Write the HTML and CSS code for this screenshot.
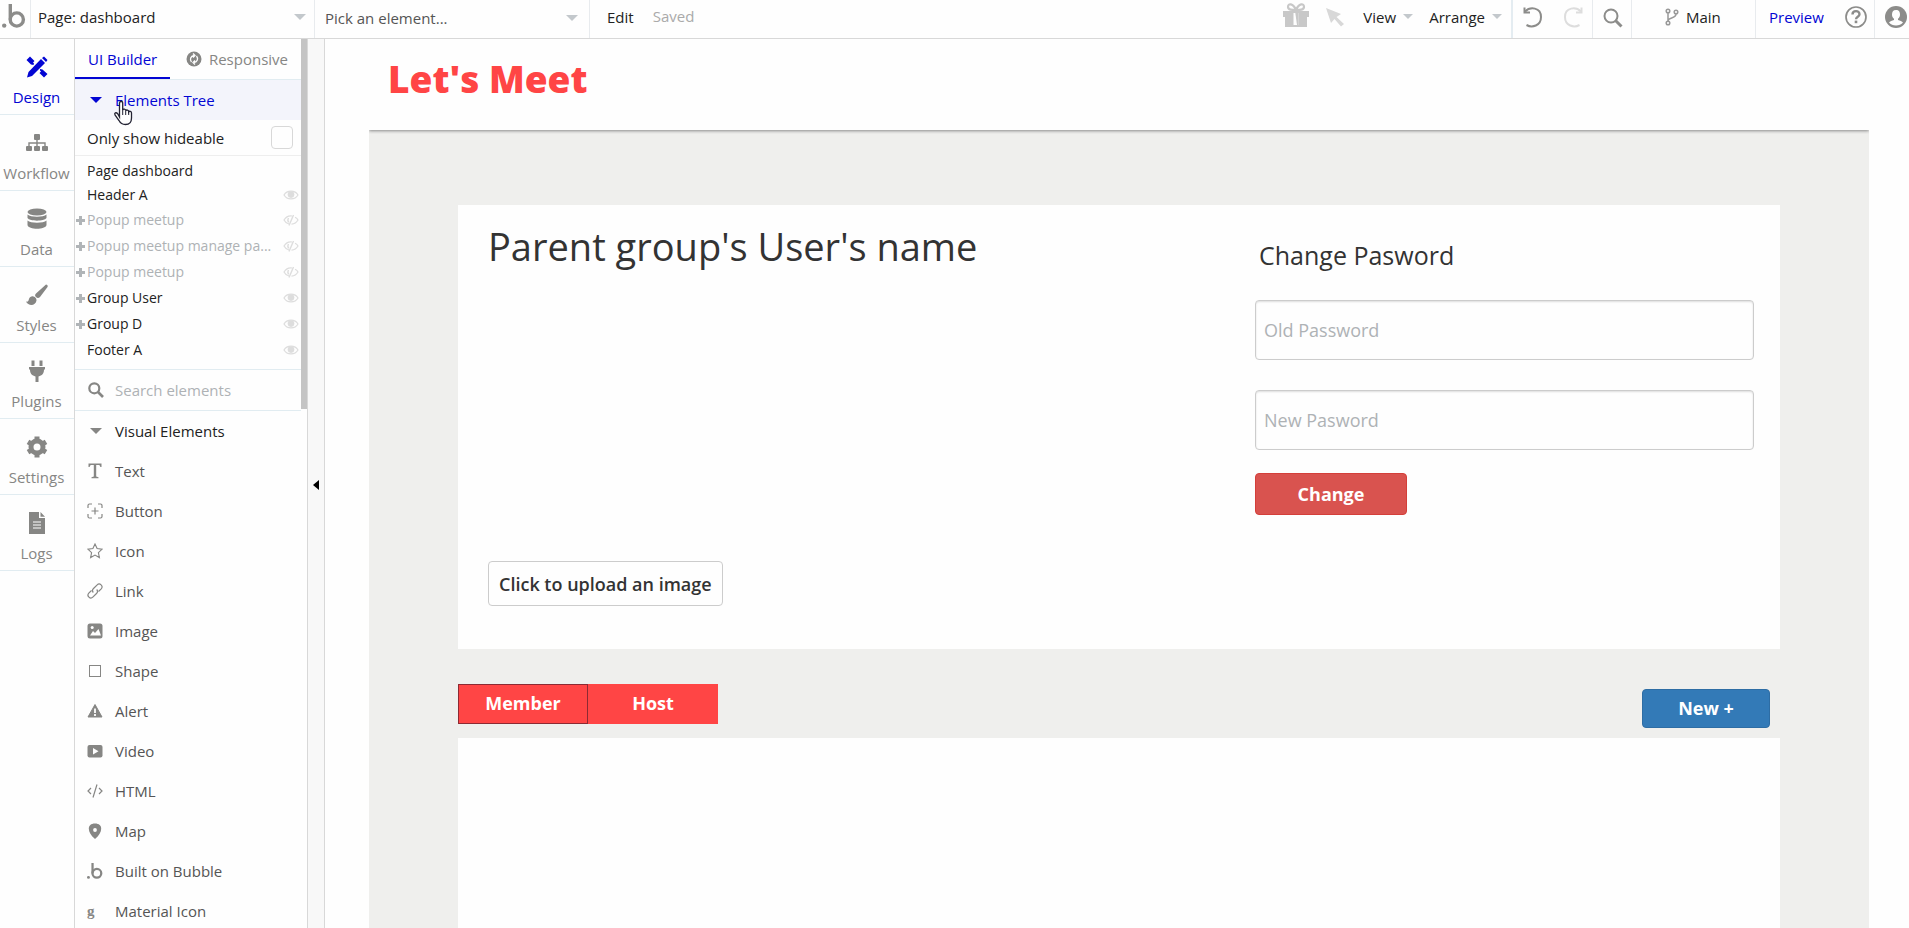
FILE: index.html
```html
<!DOCTYPE html>
<html lang="en">
<head>
  <meta charset="UTF-8" />
  <meta name="viewport" content="width=device-width, initial-scale=1.0"/>
  <title>Page: dashboard</title>
  <link rel="stylesheet" href="styles.css">
</head>
<body>

  <!-- shared icons -->
  <svg class="sprite" aria-hidden="true">
    <symbol id="eye" viewBox="0 0 16 10">
      <path d="M1 5C4-.2 12-.2 15 5 12 10.2 4 10.2 1 5z" fill="none" stroke="currentColor" stroke-width="1.2"/>
      <circle cx="8" cy="4.600" r="3.300" fill="currentColor"/>
    </symbol>
    <symbol id="eye-off" viewBox="0 0 16 12">
      <path d="M6 10C4 9.500 2 8 1 6 3.500 2 6.500 1.600 9 2M12 3.300C13.500 4 14.500 5 15 6 13.500 8.600 11 10 8.500 10.200" fill="none" stroke="currentColor" stroke-width="1.2"/>
      <path d="M10.500 1 6 11.500M5.500 4C4.500 6 5 7.500 6 8" fill="none" stroke="currentColor" stroke-width="1.4"/>
    </symbol>
    <symbol id="bubble" viewBox="0 0 24 24">
      <circle cx="2.200" cy="21.600" r="2.200" fill="currentColor"/>
      <path d="M8.300 0v15.500" fill="none" stroke="currentColor" stroke-width="3.400"/>
      <circle cx="14.800" cy="15.500" r="6.600" fill="none" stroke="currentColor" stroke-width="3.400"/>
    </symbol>
    <symbol id="search" viewBox="0 0 16 16">
      <circle cx="6.300" cy="6.300" r="5" fill="none" stroke="currentColor" stroke-width="2.200"/>
      <path d="M10 10l5 5" stroke="currentColor" stroke-width="2.600"/>
    </symbol>
  </svg>

  <header class="topbar">
    <a class="logo" href="#" aria-label="Home"><svg width="24" height="24"><use href="#bubble"/></svg></a>
    <button class="picker page-picker">Page: dashboard <i class="caret"></i></button>
    <button class="picker element-picker">Pick an element... <i class="caret"></i></button>
    <button class="menu edit">Edit</button>
    <span class="saved">Saved</span>

    <div class="group tools">
      <button class="icon-btn gift" aria-label="What's new">
        <svg width="26" height="24" viewBox="0 0 26 24" fill="currentColor">
          <path d="M0 8h26v6H0zM2 14h22v10H2z"/>
          <path d="M10.500 10h5v12h-5z" fill="#fefefe"/><path d="M12.300 10h3.200v12h-1.500z"/>
          <path d="M13 7C10 0 5 0 5 4c0 3 4 3 8 3zM13 7c3-7 8-7 8-3 0 3-4 3-8 3z" fill="none" stroke="currentColor" stroke-width="2.200"/>
        </svg>
      </button>
      <button class="icon-btn pointer" aria-label="Inspect">
        <svg width="20" height="20" viewBox="0 0 20 20" fill="currentColor"><path d="M1 1l15 6-4.500 3L19 17l-3 2.500-6.500-7.500L6 16z"/></svg>
      </button>
      <button class="menu">View <i class="caret small"></i></button>
      <button class="menu">Arrange <i class="caret small"></i></button>
    </div>
    <div class="group history">
      <button class="icon-btn" aria-label="Undo">
        <svg width="20" height="22" viewBox="0 0 20 22" fill="none" stroke="currentColor" stroke-width="2"><path d="M2 5.500C7 .5 18 1 18 11c0 9-9 11-14.500 8"/><path d="M1.500 1.500v5H7"/></svg>
      </button>
      <button class="icon-btn redo" aria-label="Redo">
        <svg width="20" height="22" viewBox="0 0 20 22" fill="none" stroke="currentColor" stroke-width="2"><path d="M18 5.500C13 .5 2 1 2 11c0 9 9 11 14.500 8"/><path d="M18.500 1.500v5H13"/></svg>
      </button>
    </div>
    <div class="group find">
      <button class="icon-btn" aria-label="Search">
        <svg width="20" height="20" viewBox="0 0 20 20" fill="none" stroke="currentColor"><circle cx="8" cy="8" r="6.500" stroke-width="2"/><path d="M12.500 12.500L18.500 18.500" stroke-width="3"/></svg>
      </button>
    </div>
    <div class="group branch">
      <button class="menu">
        <svg width="14" height="18" viewBox="0 0 14 18" fill="none" stroke="#999" stroke-width="1.500"><circle cx="3" cy="3" r="1.800"/><circle cx="3" cy="15" r="1.800"/><circle cx="11" cy="4" r="1.800"/><path d="M3 5v8M11 6c0 5-8 3-8 7"/></svg>
        Main
      </button>
    </div>
    <div class="group preview">
      <a href="#">Preview</a>
      <button class="icon-btn" aria-label="Help">
        <svg width="22" height="22" viewBox="0 0 22 22" fill="none" stroke="currentColor"><circle cx="11" cy="11" r="10" stroke-width="1.700"/><path d="M7.500 8.500C7.500 4 14.500 4 14.500 8.300c0 2.500-3.500 2.400-3.500 5" stroke-width="2.400"/><path d="M11 14.600v2.600" stroke-width="2.600"/></svg>
      </button>
    </div>
    <div class="group account">
      <button class="icon-btn" aria-label="Account">
        <svg width="22" height="22" viewBox="0 0 22 22"><circle cx="11" cy="11" r="11" fill="currentColor"/><path d="M11 4c-3 0-4 2-4 4.500 0 2 .8 3.500 2 4.300v1.200c-2 .8-4 1.200-5 2.500 3 4 11 4 14 0-1-1.300-3-1.700-5-2.500v-1.200c1.200-.8 2-2.300 2-4.300C15 6 14 4 11 4z" fill="#fefefe"/></svg>
      </button>
    </div>
  </header>

  <div class="workspace">

    <nav class="rail">
      <a class="active" href="#">
        <svg width="22" height="22" viewBox="0 0 22 22" fill="currentColor">
          <path d="M4 .5L8.500 5 7 6.500l1 1L7.500 9 5 8.500.5 4zM14 13l2.500.5L21.500 18 18 21.500 13.500 17l1.500-1.500-1-1z"/>
          <path d="M15 3l4 4L6 20l-5 1.500L2.500 16zM16 2l2-1.500L21.500 4 20 6z"/>
        </svg>
        Design
      </a>
      <a href="#">
        <svg width="22" height="22" viewBox="0 0 22 22" fill="currentColor">
          <rect x="8" y="2" width="6" height="6" rx="1"/><rect x="0" y="14" width="6" height="5" rx="1"/><rect x="8" y="14" width="6" height="5" rx="1"/><rect x="16" y="14" width="6" height="5" rx="1"/>
          <path d="M11 8v6M3 14v-3h16v3" fill="none" stroke="currentColor" stroke-width="1.400"/>
        </svg>
        Workflow
      </a>
      <a href="#">
        <svg width="22" height="22" viewBox="0 0 22 22" fill="currentColor">
          <ellipse cx="11" cy="4" rx="9.500" ry="3.500"/>
          <path d="M1.500 6.500c3 3 16 3 19 0V10c-2 3.500-17 3.500-19 0zM1.500 12.500c3 3 16 3 19 0V17c-1 5-18 5-19 0z"/>
        </svg>
        Data
      </a>
      <a href="#">
        <svg width="22" height="22" viewBox="0 0 22 22" fill="currentColor">
          <path d="M20 .5c1.500 0 2 1.500 1.500 2.500L14 13c-1.500 1.500-3 1-4 0s-1.500-2 0-3.500zM7.500 12.500c2 .5 3 2 3 4-1 6-8.500 5.500-10.500 1 2 .5 2.500-.5 3-2.500.7-2 2.500-3 4.500-2.500z"/>
        </svg>
        Styles
      </a>
      <a href="#">
        <svg width="22" height="22" viewBox="0 0 22 22" fill="currentColor">
          <path d="M5.500.5h3V6h-3zM13.500.5h3V6h-3zM3 7h16v2.500h-1c0 4-2 6-5.500 7V22h-3v-5.500C6 15.500 4 13.500 4 9.500H3z"/>
        </svg>
        Plugins
      </a>
      <a href="#">
        <svg width="22" height="22" viewBox="0 0 22 22">
          <circle cx="11" cy="11" r="6" fill="none" stroke="currentColor" stroke-width="5"/>
          <path d="M11 .5v4M11 17.500v4M2 5.800l3.400 2M16.600 14.200l3.400 2M2 16.200l3.400-2M16.600 7.800l3.400-2" stroke="currentColor" stroke-width="5"/>
        </svg>
        Settings
      </a>
      <a href="#">
        <svg width="22" height="22" viewBox="0 0 22 22" fill="currentColor">
          <path d="M3 0h10v6h6v16H3zM14.500 0L19 4.800h-4.500z"/>
          <path d="M7 10h8M7 13h8M7 16h8" stroke="#fefefe" stroke-width="1.200"/>
        </svg>
        Logs
      </a>
    </nav>

    <aside class="panel">
      <div class="panel-content">
        <div class="panel-tabs">
          <button class="active">UI Builder</button>
          <button>
            <svg width="16" height="16" viewBox="0 0 16 16"><circle cx="8" cy="8" r="7.500" fill="currentColor"/><path d="M5.500 11C3.500 8.500 4.500 5 8 4.500M10.500 5c2 2.500 1 6-2.500 6.500M7 2.500l2 2-2 2M9 9.500l-2 2 2 2" fill="none" stroke="#fefefe" stroke-width="1.300"/></svg>
            Responsive
          </button>
        </div>

        <button class="tree-title"><i class="caret"></i>Elements Tree
          <svg class="hand" width="20" height="26" viewBox="0 0 20 26"><path d="M6.500 17V3.500c0-3 3.200-3 3.200 0V10c.5-1.500 3-1.200 3 .8.600-1.300 3-1 3 1 .6-1 2.800-.6 2.800 1.200V18c0 4-2 6.500-6 6.500-3.500 0-5-1-6.500-4l-4-5.500c-1-2 1-3 2.500-1.500z" fill="#fff" stroke="#223" stroke-width="1.300"/><path d="M9.700 10v5M12.700 11v4M15.700 12v3" stroke="#223"/></svg>
        </button>

        <div class="hideable">
          <label for="hideable">Only show hideable</label>
          <input type="checkbox" id="hideable">
        </div>

        <ul class="tree">
          <li class="top">Page dashboard</li>
          <li class="top">Header A<svg width="16" height="10"><use href="#eye"/></svg></li>
          <li class="parent hidden">Popup meetup<svg width="16" height="12"><use href="#eye-off"/></svg></li>
          <li class="parent hidden">Popup meetup manage pa...<svg width="16" height="12"><use href="#eye-off"/></svg></li>
          <li class="parent hidden">Popup meetup<svg width="16" height="12"><use href="#eye-off"/></svg></li>
          <li class="parent">Group User<svg width="16" height="10"><use href="#eye"/></svg></li>
          <li class="parent">Group D<svg width="16" height="10"><use href="#eye"/></svg></li>
          <li>Footer A<svg width="16" height="10"><use href="#eye"/></svg></li>
        </ul>

        <div class="search">
          <svg width="16" height="16"><use href="#search"/></svg>
          <input type="text" placeholder="Search elements" aria-label="Search elements">
        </div>

        <button class="section"><i class="caret"></i>Visual Elements</button>
        <ul class="elements">
          <li><svg width="16" height="16" viewBox="0 0 16 16" fill="currentColor"><path d="M1.500.5h13V4h-1.200c-.2-1.500-.8-2-2-2H9.200v11.500l2.300.7v1h-7v-1l2.300-.7V2H4.700c-1.200 0-1.800.5-2 2H1.500z"/></svg>Text</li>
          <li><svg width="16" height="16" viewBox="0 0 16 16" fill="none" stroke="currentColor" stroke-width="1.200"><path d="M1 5V2.500Q1 1 2.500 1H5M11 1h2.500Q15 1 15 2.500V5M15 11v2.500q0 1.500-1.500 1.500H11M5 15H2.500Q1 15 1 13.500V11M8 4.500v7M4.500 8h7"/></svg>Button</li>
          <li><svg width="16" height="16" viewBox="0 0 16 16" fill="none" stroke="currentColor" stroke-width="1.100"><path d="M8 1l2.100 4.600 5 .6-3.700 3.400 1 5L8 12.100l-4.400 2.500 1-5L.9 6.200l5-.6z"/></svg>Icon</li>
          <li><svg width="16" height="16" viewBox="0 0 16 16" fill="none" stroke="currentColor" stroke-width="1.200"><path d="M6.300 9.500C5 8 5.300 6.700 6.500 5.500l3.700-3.700c2.500-2.500 6.500 1.300 4 4L11.500 8.500M9.700 6.500c1.300 1.500 1 2.800-.2 4l-3.700 3.700c-2.500 2.500-6.500-1.300-4-4L4.500 7.500"/></svg>Link</li>
          <li><svg width="16" height="16" viewBox="0 0 16 16"><rect x=".5" y=".5" width="15" height="15" rx="2.500" fill="currentColor"/><path d="M3 12.500L6 8l2 2 3.500-4L14 12.500z" fill="#fefefe"/><circle cx="5.200" cy="4.500" r="1.500" fill="#fefefe"/></svg>Image</li>
          <li><svg width="16" height="16" viewBox="0 0 16 16"><rect x="2.500" y="2.500" width="11" height="11" fill="none" stroke="currentColor"/></svg>Shape</li>
          <li><svg width="16" height="16" viewBox="0 0 16 16"><path d="M8 1.500L15 14H1z" fill="currentColor" stroke="currentColor" stroke-linejoin="round"/><path d="M8 5.500v4.500M8 11v2" stroke="#fefefe" stroke-width="1.800"/></svg>Alert</li>
          <li><svg width="16" height="16" viewBox="0 0 16 16"><rect x=".5" y="2" width="15" height="12.500" rx="2" fill="currentColor"/><path d="M6 5l5.500 3.200L6 11.500z" fill="#fefefe"/></svg>Video</li>
          <li><svg width="16" height="16" viewBox="0 0 16 16" fill="none" stroke="currentColor" stroke-width="1.200"><path d="M4 5L1 8l3 3M12 5l3 3-3 3M10 1.500L6 14.500"/></svg>HTML</li>
          <li><svg width="16" height="16" viewBox="0 0 16 16"><path d="M8 .5c8.500 0 8 9 0 15.500C0 9.500-.5.500 8 .5z" fill="currentColor"/><circle cx="8" cy="7" r="1.900" fill="#fefefe"/></svg>Map</li>
          <li><svg width="16" height="16"><use href="#bubble"/></svg>Built on Bubble</li>
          <li><b class="letter">g</b>Material Icon</li>
        </ul>
      </div>
      <div class="scrollbar"><div class="thumb"></div></div>
    </aside>

    <button class="collapse" aria-label="Collapse panel"><i></i></button>

    <main class="canvas">
      <div class="page">
        <div class="page-header"><h1>Let's Meet</h1></div>

        <div class="page-body">
          <section class="card user">
            <div class="profile">
              <h2>Parent group's User's name</h2>
              <button class="btn upload">Click to upload an image</button>
            </div>
            <form class="password">
              <h3>Change Pasword</h3>
              <input type="text" placeholder="Old Password" aria-label="Old Password">
              <input type="text" placeholder="New Pasword" aria-label="New Pasword">
              <button type="button" class="btn change">Change</button>
            </form>
          </section>

          <div class="actions">
            <div class="roles">
              <button class="selected">Member</button>
              <button>Host</button>
            </div>
            <button class="btn new">New +</button>
          </div>

          <section class="card list"></section>
        </div>
      </div>
    </main>

  </div>

</body>
</html>
```
FILE: styles.css
```css
* {
  margin: 0;
  padding: 0;
  box-sizing: border-box;
}

body {
  font-family: 'Open Sans', sans-serif;
  font-size: 15px;
  line-height: 20px;
  color: #222;
  background: #fefefe;
  height: 100vh;
  display: flex;
  flex-direction: column;
  overflow: hidden;
}

button, input {
  font: inherit;
  color: inherit;
  background: none;
  border: none;
}

button {
  cursor: pointer;
  white-space: nowrap;
}

a {
  color: inherit;
  text-decoration: none;
}

ul {
  list-style: none;
}

svg {
  flex: none;
}

.sprite {
  position: absolute;
  width: 0;
  height: 0;
}

.caret {
  flex: none;
  border: 6px solid transparent;
  border-top-color: currentColor;
  border-bottom: none;
}

.caret.small {
  border-width: 5px;
  border-bottom: none;
}

/* top bar */
.topbar {
  display: flex;
  flex: none;
  height: 39px;
  border-bottom: 1px solid #d8d8d8;
}

.logo {
  width: 31px;
  padding: 4px 2px;
  color: #8c8c8a;
  border-right: 1px solid #e8ebee;
}

.picker {
  display: flex;
  align-items: center;
  justify-content: space-between;
  padding: 0 8px 5px 7px;
  border-right: 1px solid #e8ebee;
}

.page-picker {
  width: 284px;
}

.element-picker {
  width: 275px;
  padding: 0 11px 3px 10px;
  color: #555;
}

.topbar .caret {
  color: #c3c8cc;
}

.menu {
  display: flex;
  align-items: center;
  gap: 7px;
}

.edit, .saved, .group {
  padding-bottom: 5px;
}

.edit {
  margin-left: 17px;
}

.saved {
  margin-left: 19px;
  line-height: 33px;
  color: #aaa;
}

.group {
  display: flex;
  align-items: center;
  border-left: 1px solid #e8ebee;
}

.icon-btn {
  display: flex;
  color: #8c8c8a;
}

.tools {
  margin-left: auto;
  border: none;
  padding-right: 9px;
  gap: 16px;
}

.tools .gift {
  color: #c8c8c8;
  padding-bottom: 4px;
}

.tools .pointer {
  color: #d8d8d8;
  margin-right: 2px;
}

.history {
  width: 81px;
  border-left: 2px solid #e4ecf1;
  padding-left: 10px;
  gap: 20px;
}

.history .redo {
  color: #ddd;
}

.find {
  width: 39px;
  padding: 0 0 2px 10px;
}

.branch {
  width: 124px;
  padding-left: 33px;
}

.preview {
  width: 119px;
  padding-left: 13px;
  gap: 21px;
  color: #0205d3;
}

.account {
  width: 35px;
  padding-left: 10px;
}

/* layout */
.workspace {
  display: flex;
  flex: 1;
  min-height: 0;
}

.rail {
  width: 75px;
  flex: none;
  border-right: 1px solid #d8d8d8;
  color: #868684;
}

.rail a {
  display: flex;
  flex-direction: column;
  align-items: center;
  gap: 9px;
  height: 76px;
  padding: 17px 1px 0 0;
  border-bottom: 1px solid #e1ecf1;
}

.rail .active {
  color: #0205d3;
}

/* elements panel */
.panel {
  display: flex;
  width: 233px;
  flex: none;
  border-right: 1px solid #d8d8d8;
  overflow: hidden;
}

.panel-content {
  flex: 1;
  min-width: 0;
}

.scrollbar {
  width: 6px;
}

.thumb {
  height: 370px;
  background: #c4c4c4;
}

.panel-tabs {
  display: flex;
  height: 41px;
  border-bottom: 1px solid #e1ecf1;
  color: #868684;
}

.panel-tabs button {
  display: flex;
  align-items: center;
  gap: 7px;
  padding: 0 13px 0 16px;
}

.panel-tabs .active {
  width: 95px;
  padding: 0 0 0 13px;
  color: #0205d3;
  box-shadow: inset 0 -2px #0205d3;
}

.tree-title, .section {
  position: relative;
  display: flex;
  align-items: center;
  gap: 13px;
  width: 100%;
  height: 40px;
  padding: 0 15px;
}

.tree-title {
  background: #f3f4fb;
  color: #0205d3;
}

.section .caret {
  color: #868684;
}

/* pointer over the tree title */
.hand {
  position: absolute;
  left: 38px;
  top: 20px;
}

.hideable {
  display: flex;
  align-items: center;
  justify-content: space-between;
  height: 36px;
  padding: 0 8px 0 12px;
  border-bottom: 1px solid #eee;
}

.hideable input {
  appearance: none;
  width: 22px;
  height: 23px;
  border: 1px solid #d8d8d8;
  border-radius: 4px;
}

.tree {
  padding: 3px 0 6px;
  font-size: 14px;
  border-bottom: 1px solid #e1ecf1;
}

.tree li {
  position: relative;
  display: flex;
  align-items: center;
  justify-content: space-between;
  height: 26px;
  padding: 0 2px 0 12px;
  white-space: nowrap;
}

.tree .top {
  height: 24px;
}

.tree .hidden {
  color: #aeb2b5;
}

.tree svg {
  color: #ddd;
}

/* plus sign that opens a parent */
.parent::before, .parent::after {
  content: '';
  position: absolute;
  left: 1px;
  top: 12px;
  width: 9px;
  height: 3px;
  background: #b0b4b7;
}

.parent::after {
  transform: rotate(90deg);
}

.search {
  display: flex;
  align-items: center;
  gap: 11px;
  height: 41px;
  padding: 0 13px;
  color: #868684;
  border-bottom: 1px solid #e1ecf1;
}

.search input {
  flex: 1;
  min-width: 0;
}

::placeholder {
  color: #aeb2b5;
  opacity: 1;
}

.elements li {
  display: flex;
  align-items: center;
  gap: 12px;
  height: 40px;
  padding: 0 12px;
  color: #555;
}

.elements svg, .letter {
  width: 16px;
  color: #868684;
}

.letter {
  font-family: 'Liberation Serif', serif;
}

.collapse {
  width: 17px;
  flex: none;
  background: #f8f8f8;
  border-right: 1px solid #d8d8d8;
}

.collapse i {
  display: block;
  margin: 2px 0 0 5px;
  width: 6px;
  border: 5px solid transparent;
  border-right: 6px solid #000;
  border-left: none;
}

/* edited page */
.canvas {
  flex: 1;
  min-width: 0;
  overflow: hidden;
  padding: 0 40px 0 44px;
}

.page {
  display: flex;
  flex-direction: column;
  height: 100%;
}

.page-header {
  position: relative;
  flex: none;
  height: 91px;
  padding: 16px 19px;
  background: #fefefe;
  box-shadow: 0 1px 3px #888;
  clip-path: inset(0 0 -4px 0);
}

h1 {
  font-size: 37px;
  line-height: 48px;
  font-weight: 800;
  color: #ff4545;
}

.page-body {
  display: flex;
  flex-direction: column;
  flex: 1;
  padding: 75px 89px 0;
  background: #efefed;
}

.card {
  background: #fefefe;
}

.user {
  display: flex;
  justify-content: space-between;
  padding: 16px 26px 43px 30px;
  color: #333;
}

.profile {
  display: flex;
  flex-direction: column;
  justify-content: space-between;
  align-items: flex-start;
}

h2 {
  font-size: 38px;
  line-height: 50px;
  font-weight: 400;
}

h3 {
  font-size: 25px;
  line-height: 36px;
  font-weight: 400;
  padding: 0 4px;
  margin-bottom: 27px;
}

.password {
  width: 499px;
  padding-top: 16px;
  margin-bottom: 91px;
}

.password input {
  display: block;
  width: 100%;
  height: 60px;
  padding: 0 8px;
  margin-bottom: 30px;
  font-size: 18px;
  border: 1px solid #ccc;
  border-radius: 4px;
  box-shadow: inset 0 1px 2px #ddd;
}

.btn {
  font-size: 18px;
  font-weight: 700;
  color: #fff;
  border-radius: 4px;
}

.upload {
  height: 45px;
  padding: 0 10px;
  font-weight: 600;
  color: #333;
  border: 1px solid #ccc;
}

.change {
  width: 152px;
  height: 42px;
  margin-top: -7px;
  background: #d9534f;
  border: 1px solid #d43f3a;
}

.actions {
  display: flex;
  justify-content: space-between;
  padding: 35px 10px 10px 0;
}

.roles {
  display: flex;
  align-items: flex-start;
}

.roles button {
  width: 130px;
  height: 40px;
  padding-bottom: 2px;
  font-size: 18px;
  font-weight: 700;
  color: #fff;
  background: #ff4545;
}

.roles .selected {
  border: 1px solid #8c2a33;
}

.new {
  width: 128px;
  height: 39px;
  margin-top: 5px;
  padding-bottom: 2px;
  background: #337ab7;
  border: 1px solid #2e6da4;
}

.list {
  flex: 1;
}
```
